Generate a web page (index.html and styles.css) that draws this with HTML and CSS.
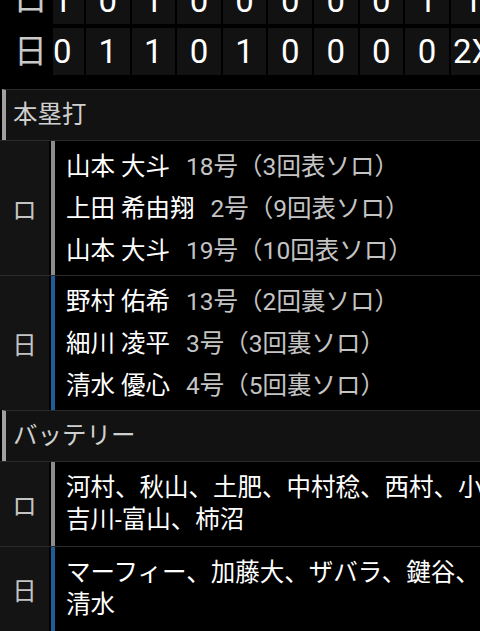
FILE: index.html
```html
<!DOCTYPE html>
<html lang="ja">

<head>
    <meta charset="UTF-8">
    <meta name="viewport" content="width=device-width, initial-scale=1.0">
    <title>試合詳細</title>
    <link rel="stylesheet" href="styles.css">
</head>

<body>
    <div class="scoreboard">
        <div class="score-row">
            <div class="score-team">ロ</div>
            <div class="score-cells">
                <div class="score-track">
                    <div class="cell">1</div>
                    <div class="cell">0</div>
                    <div class="cell">1</div>
                    <div class="cell">0</div>
                    <div class="cell">0</div>
                    <div class="cell">0</div>
                    <div class="cell">0</div>
                    <div class="cell">0</div>
                    <div class="cell">1</div>
                    <div class="cell">1</div>
                </div>
            </div>
        </div>
        <div class="score-row">
            <div class="score-team">日</div>
            <div class="score-cells">
                <div class="score-track">
                    <div class="cell">0</div>
                    <div class="cell">1</div>
                    <div class="cell">1</div>
                    <div class="cell">0</div>
                    <div class="cell">1</div>
                    <div class="cell">0</div>
                    <div class="cell">0</div>
                    <div class="cell">0</div>
                    <div class="cell">0</div>
                    <div class="cell">2X</div>
                </div>
            </div>
        </div>
    </div>

    <section class="section">
        <h2 class="section-title">本塁打</h2>

        <div class="team-row">
            <div class="team-label">ロ</div>
            <div class="team-body marines homeruns">
                <div class="line"><span class="name">山本 大斗</span><span class="detail">18号（3回表ソロ）</span></div>
                <div class="line"><span class="name">上田 希由翔</span><span class="detail">2号（9回表ソロ）</span></div>
                <div class="line"><span class="name">山本 大斗</span><span class="detail">19号（10回表ソロ）</span></div>
            </div>
        </div>

        <div class="team-row">
            <div class="team-label">日</div>
            <div class="team-body fighters homeruns">
                <div class="line"><span class="name">野村 佑希</span><span class="detail">13号（2回裏ソロ）</span></div>
                <div class="line"><span class="name">細川 凌平</span><span class="detail">3号（3回裏ソロ）</span></div>
                <div class="line"><span class="name">清水 優心</span><span class="detail">4号（5回裏ソロ）</span></div>
            </div>
        </div>
    </section>

    <section class="section">
        <h2 class="section-title">バッテリー</h2>

        <div class="team-row">
            <div class="team-label">ロ</div>
            <div class="team-body marines battery">
                <div class="line">河村、秋山、土肥、中村稔、西村、小野</div>
                <div class="line">吉川-富山、柿沼</div>
            </div>
        </div>

        <div class="team-row">
            <div class="team-label">日</div>
            <div class="team-body fighters battery">
                <div class="line">マーフィー、加藤大、ザバラ、鍵谷、</div>
                <div class="line">清水</div>
            </div>
        </div>
    </section>
</body>

</html>
```

FILE: styles.css
```css
* {
    margin: 0;
    padding: 0;
    box-sizing: border-box;
}

body {
    font-family: Roboto, 'Noto Sans CJK JP', sans-serif;
    background-color: #000;
    color: #fff;
    overflow: hidden;
}

/* scoreboard (scrolled part way) */
.scoreboard {
    margin-top: -23px;
    display: flex;
    flex-direction: column;
    gap: 4px;
}

.score-row {
    display: flex;
    height: 47px;
}

.score-team {
    flex: 0 0 53px;
    padding-left: 14px;
    font-size: 33px;
    line-height: 47px;
    color: #c8c8c8;
    background-color: #000;
}

.score-cells {
    flex: 1;
    overflow: hidden;
}

.score-track {
    display: flex;
    gap: 2px;
    margin-left: -12.6px;
}

.cell {
    flex: 0 0 43.6px;
    background-color: #121212;
    text-align: center;
    font-size: 33px;
    line-height: 47px;
    white-space: nowrap;
}

/* sections */
.section {
    margin-top: 14px;
}

.section + .section {
    margin-top: 0;
}

.section-title {
    height: 51px;
    margin-left: 2px;
    padding-left: 7px;
    border-left: 4px solid #a0a0a0;
    border-top: 1px solid #2a2a2a;
    background-color: #121212;
    font-size: 24.5px;
    font-weight: normal;
    line-height: 50px;
    color: #cfcfcf;
}

.team-row {
    display: flex;
    border-top: 1px solid #2a2a2a;
}

.team-label {
    flex: 0 0 49px;
    display: flex;
    align-items: center;
    justify-content: center;
    background-color: #141414;
    font-size: 24.5px;
    color: #c4c4c4;
}

.team-body {
    flex: 1;
    margin-left: 2px;
    padding-left: 11px;
    border-left: 4px solid;
    font-size: 24.5px;
    overflow: hidden;
    white-space: nowrap;
}

.marines {
    border-left-color: #8c8c8c;
}

.fighters {
    border-left-color: #1d5e98;
}

.homeruns {
    padding-top: 5px;
    padding-bottom: 3px;
    line-height: 42px;
}

.battery {
    padding-top: 10px;
    padding-bottom: 10px;
    line-height: 32px;
}

.name {
    color: #fff;
}

.detail {
    margin-left: 16px;
    color: #c4c4c4;
}
```
